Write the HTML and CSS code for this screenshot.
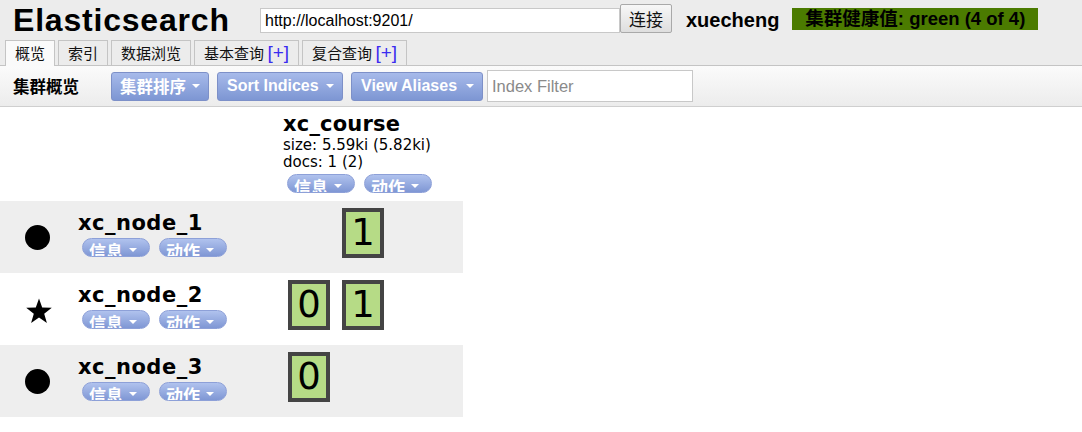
FILE: index.html
```html
<!DOCTYPE html>
<html lang="zh">
<head>
<meta charset="utf-8">
<title>Elasticsearch</title>
<link rel="stylesheet" href="styles.css">
</head>
<body>
<div class="header">
  <h1 class="brand">Elasticsearch</h1>
  <div class="connect">
    <input class="url" type="text" value="http://localhost:9201/">
    <button class="connect-btn">连接</button>
  </div>
  <span class="cluster-name">xuecheng</span>
  <span class="health">集群健康值: green (4 of 4)</span>
</div>
<div class="tabs">
  <span class="tab active">概览</span>
  <span class="tab">索引</span>
  <span class="tab">数据浏览</span>
  <span class="tab">基本查询 <span class="plus">[+]</span></span>
  <span class="tab">复合查询 <span class="plus">[+]</span></span>
</div>
<div class="toolbar">
  <span class="toolbar-title">集群概览</span>
  <span class="btn btn-first">集群排序<i class="caret"></i></span>
  <span class="btn btn-sort">Sort Indices<i class="caret"></i></span>
  <span class="btn btn-alias">View Aliases<i class="caret"></i></span>
  <input class="filter" type="text" placeholder="Index Filter">
</div>
<div class="overview">
  <div class="cell head-icon"></div>
  <div class="cell head-name"></div>
  <div class="cell index-head">
    <div class="index-name">xc_course</div>
    <div class="index-meta">size: 5.59ki (5.82ki)</div>
    <div class="index-meta">docs: 1 (2)</div>
    <div class="pills">
      <span class="pill">信息<i class="caret"></i></span>
      <span class="pill">动作<i class="caret"></i></span>
    </div>
  </div>

  <div class="row odd">
    <div class="node-icon"><span class="dot"></span></div>
    <div class="node-info">
      <div class="node-name">xc_node_1</div>
      <div class="pills node-pills">
        <span class="pill">信息<i class="caret"></i></span>
        <span class="pill">动作<i class="caret"></i></span>
      </div>
    </div>
    <div class="shards">
      <span class="slot"></span>
      <span class="shard">1</span>
    </div>
  </div>

  <div class="row">
    <div class="node-icon">
      <svg class="star" viewBox="0 0 28 28" width="28" height="28"><path d="M14 1.5 L17.2 10.6 L26.8 10.8 L19.2 16.7 L21.9 26 L14 20.5 L6.1 26 L8.8 16.7 L1.2 10.8 L10.8 10.6 Z" fill="#000"/></svg>
    </div>
    <div class="node-info">
      <div class="node-name">xc_node_2</div>
      <div class="pills node-pills">
        <span class="pill">信息<i class="caret"></i></span>
        <span class="pill">动作<i class="caret"></i></span>
      </div>
    </div>
    <div class="shards">
      <span class="shard">0</span>
      <span class="shard">1</span>
    </div>
  </div>

  <div class="row odd">
    <div class="node-icon"><span class="dot"></span></div>
    <div class="node-info">
      <div class="node-name">xc_node_3</div>
      <div class="pills node-pills">
        <span class="pill">信息<i class="caret"></i></span>
        <span class="pill">动作<i class="caret"></i></span>
      </div>
    </div>
    <div class="shards">
      <span class="shard">0</span>
    </div>
  </div>
</div>
</body>
</html>
```

FILE: styles.css
```css
* { box-sizing: border-box; }
html, body { margin: 0; padding: 0; background: #fff; }
body {
  font-family: "DejaVu Sans", Verdana, "Noto Sans CJK SC", sans-serif;
  color: #000;
  width: 1082px;
  height: 432px;
  overflow: hidden;
}

.header {
  background: #ececec;
  height: 41px;
  display: flex;
  align-items: flex-start;
  padding-left: 13px;
}
.brand {
  margin: 0;
  font-family: "Liberation Sans", Arial, "Noto Sans CJK SC", sans-serif;
  font-weight: bold;
  font-size: 32px;
  line-height: 40px;
  letter-spacing: 0.8px;
  width: 247px;
}
.connect { display: flex; align-items: flex-start; margin-top: 4px; }
.url {
  width: 360px;
  height: 25px;
  margin-top: 4px;
  border: 1px solid #c8c8c8;
  padding: 0 4px;
  font-family: "Liberation Sans", Arial, sans-serif;
  font-size: 16px;
  color: #000;
  background: #fff;
  outline: none;
}
.connect-btn {
  width: 52px;
  height: 29px;
  border: 1px solid #a9a9a9;
  border-radius: 2px;
  background: linear-gradient(#f7f7f7, #dedede);
  font-family: "Noto Sans CJK SC", sans-serif;
  font-size: 17px;
  padding: 0;
  color: #111;
}
.cluster-name {
  margin-left: 14px;
  font-family: "Liberation Sans", Arial, sans-serif;
  font-weight: bold;
  font-size: 20px;
  line-height: 40px;
}
.health {
  margin-left: 13px;
  margin-top: 8px;
  background: #4b7b00;
  height: 22px;
  line-height: 22px;
  padding: 0 13px;
  font-family: "Liberation Sans", Arial, "Noto Sans CJK SC", sans-serif;
  font-weight: bold;
  font-size: 18.5px;
  color: #000;
  white-space: nowrap;
}

.tabs {
  background: #ececec;
  height: 25px;
  display: flex;
  align-items: flex-end;
  padding-left: 5px;
  gap: 3px;
  border-bottom: 1px solid #c4c4c4;
}
.tab {
  height: 25px;
  border: 1px solid #c4c4c4;
  border-bottom: none;
  padding: 0 9px;
  font-family: "Noto Sans CJK SC", sans-serif;
  font-size: 15px;
  line-height: 24px;
  color: #111;
  background: #ececec;
  white-space: nowrap;
}
.tab.active {
  background: #fafafa;
  height: 26px;
  margin-bottom: -1px;
}
.plus { color: #3a2cf0; font-family: "Liberation Sans", Arial, sans-serif; font-size: 19px; }

.toolbar {
  height: 41px;
  background: linear-gradient(#fbfbfb, #ececec);
  border-bottom: 1px solid #cfcfcf;
  display: flex;
  align-items: center;
  padding-left: 13px;
}
.toolbar-title {
  font-family: "Noto Sans CJK SC", sans-serif;
  font-weight: bold;
  font-size: 16.5px;
  width: 98px;
}
.btn {
  display: inline-flex;
  align-items: center;
  height: 29px;
  padding: 0 8px 0 9px;
  border: 1px solid #7d90c8;
  border-radius: 3px;
  background: linear-gradient(#a7baea, #7d96d3);
  color: #fff;
  font-family: "Liberation Sans", Arial, "Noto Sans CJK SC", sans-serif;
  font-weight: bold;
  font-size: 16px;
  white-space: nowrap;
  margin-right: 8px;
}
.btn-first { width: 98px; padding-left: 8px; font-size: 16.5px; }
.btn-sort { width: 126px; }
.btn-alias { width: 132px; margin-right: 4px; }
.btn .caret { margin-left: auto; }
.caret {
  display: inline-block;
  width: 0;
  height: 0;
  border-left: 4px solid transparent;
  border-right: 4px solid transparent;
  border-top: 4px solid #fff;
  margin-left: 6px;
}
.filter {
  width: 206px;
  height: 32px;
  border: 1px solid #c8c8c8;
  padding: 0 4px;
  font-family: "Liberation Sans", Arial, sans-serif;
  font-size: 16.5px;
  background: #fff;
  outline: none;
}
.filter::placeholder { color: #8a8a8a; }

.overview {
  display: grid;
  grid-template-columns: 78px 205px 180px;
  grid-template-rows: 94px repeat(3, 72px);
}
.row { display: contents; }
.row > div { height: 72px; }
.row.odd > div { background: #eeeeee; }

.index-head { padding-top: 5px; }
.index-name {
  font-weight: bold;
  font-size: 21px;
  letter-spacing: 0.2px;
  line-height: 25px;
}
.index-meta {
  font-size: 15px;
  line-height: 17px;
}
.pills { display: flex; gap: 9px; margin-top: 3px; padding-left: 4px; }
.pill {
  display: inline-flex;
  align-items: flex-start;
  width: 68px;
  height: 19px;
  overflow: hidden;
  border: 1px solid #8da0d8;
  border-radius: 10px;
  background: linear-gradient(#b0c2ee, #7f97d4);
  color: #fff;
  font-family: "Noto Sans CJK SC", sans-serif;
  font-weight: bold;
  font-size: 17px;
  line-height: 20px;
  padding: 2px 0 0 6px;
}
.pill .caret { margin-top: 7px; margin-left: 6px; }

.node-icon {
  display: flex;
  align-items: center;
  padding-left: 25px;
}
.dot {
  width: 25px;
  height: 25px;
  border-radius: 50%;
  background: #000;
}
.star { display: block; margin-top: 4px; }
.node-info { padding-top: 10px; }
.node-name {
  font-weight: bold;
  font-size: 21px;
  letter-spacing: 0.5px;
  line-height: 25px;
}
.node-pills { margin-top: 2px; }

.shards {
  display: flex;
  gap: 12px;
  padding: 7px 0 0 5px;
}
.slot { width: 42px; height: 50px; }
.shard {
  width: 42px;
  height: 50px;
  border: 4px solid #444;
  background: #b6db86;
  font-family: "DejaVu Sans", Verdana, sans-serif;
  font-size: 37px;
  line-height: 42px;
  text-align: center;
  color: #000;
}
```
